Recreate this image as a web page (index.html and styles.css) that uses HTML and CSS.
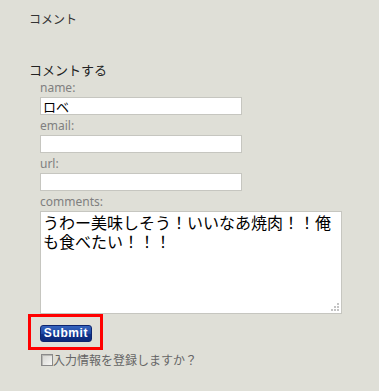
FILE: index.html
```html
<!DOCTYPE html>
<html lang="ja">
<head>
<meta charset="utf-8">
<title>コメント</title>
<link rel="stylesheet" href="styles.css">
</head>
<body>
<div class="page">
  <h3 class="title">コメント</h3>
  <h3 class="form-title">コメントする</h3>
  <form class="form">
    <label class="label" for="name">name:</label>
    <input class="field" id="name" type="text" value="ロベ">
    <label class="label" for="email">email:</label>
    <input class="field" id="email" type="text">
    <label class="label" for="url">url:</label>
    <input class="field" id="url" type="text">
    <label class="label" for="comments">comments:</label>
    <div class="comments-wrap">
      <textarea class="comments" id="comments">うわー美味しそう！いいなあ焼肉！！俺も食べたい！！！</textarea>
      <svg class="grip" width="8" height="8" viewBox="0 0 8 8" aria-hidden="true">
        <rect x="6" y="0" width="2" height="2" fill="#c4c4c4"/>
        <rect x="3" y="3" width="2" height="2" fill="#c4c4c4"/>
        <rect x="6" y="3" width="2" height="2" fill="#c4c4c4"/>
        <rect x="0" y="6" width="2" height="2" fill="#c4c4c4"/>
        <rect x="3" y="6" width="2" height="2" fill="#c4c4c4"/>
        <rect x="6" y="6" width="2" height="2" fill="#c4c4c4"/>
      </svg>
    </div>
    <div class="submit-row">
      <div class="highlight"><button class="submit" type="button">Submit</button></div>
    </div>
    <label class="remember"><input class="check" type="checkbox">入力情報を登録しますか？</label>
  </form>
</div>
</body>
</html>
```

FILE: styles.css
```css
html, body {
  margin: 0;
  padding: 0;
  background: #dfdfd7;
}

.page {
  padding: 11px 0 0 29px;
  font-family: "Noto Sans CJK JP", "Noto Sans", sans-serif;
  color: #333;
}

.title {
  margin: 0;
  font-size: 12px;
  line-height: 16px;
  font-weight: normal;
  color: #333;
}

.form-title {
  margin: 35px 0 0;
  font-size: 13px;
  line-height: 16px;
  font-weight: normal;
  color: #222;
}

.form {
  margin: 3px 0 0 11px;
}

.label {
  display: block;
  font-family: "Noto Sans", sans-serif;
  font-size: 12px;
  line-height: 13px;
  color: #808080;
}

.field {
  display: block;
  box-sizing: border-box;
  width: 202px;
  height: 18px;
  margin: 3px 0 4px;
  padding: 0 2px;
  border: 1px solid #c6c6c0;
  background: #fff;
  font-family: "Noto Sans CJK JP", sans-serif;
  font-size: 13px;
  line-height: 16px;
  color: #000;
  outline: none;
}

.comments-wrap {
  position: relative;
  width: 302px;
  margin: 3px 0 0;
}

.comments {
  display: block;
  box-sizing: border-box;
  width: 302px;
  height: 103px;
  margin: 0;
  padding: 1px 2px;
  border: 1px solid #c6c6c0;
  background: #fff;
  font-family: "Noto Sans CJK JP", sans-serif;
  font-size: 16px;
  line-height: 19px;
  color: #000;
  overflow: hidden;
  outline: none;
  resize: none;
}

.grip {
  position: absolute;
  right: 3px;
  bottom: 3px;
  display: block;
}

.submit-row {
  margin-left: -12px;
}

.highlight {
  display: inline-block;
  border: 3px solid #ff0000;
  padding: 8px 8px 5px 9px;
}

.submit {
  display: block;
  box-sizing: border-box;
  width: 52px;
  height: 17px;
  padding: 0;
  border: 1px solid #0d246e;
  border-radius: 3px;
  background: linear-gradient(#3563bd, #1d48a3 50%, #0f3189 51%, #0b2a7a);
  color: #fff;
  font-family: "Liberation Sans", sans-serif;
  font-size: 12px;
  font-weight: bold;
  letter-spacing: 0.6px;
  line-height: 15px;
}

.remember {
  display: flex;
  align-items: center;
  margin: 3px 0 0 1px;
  font-family: "Noto Sans CJK JP", sans-serif;
  font-size: 12px;
  line-height: 14px;
  color: #666;
}

.check {
  appearance: none;
  -webkit-appearance: none;
  box-sizing: border-box;
  width: 12px;
  height: 12px;
  margin: 0;
  border: 1px solid #8a8a8a;
  background: linear-gradient(135deg, #d4d4d0, #f6f6f4);
  box-shadow: inset 1px 1px 0 #b8b8b4;
}
```
